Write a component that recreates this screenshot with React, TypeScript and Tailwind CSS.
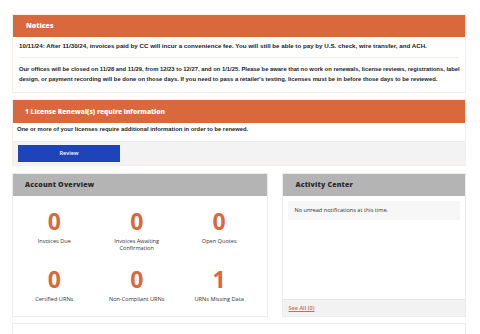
const orange = "bg-[#d9693c]";

const Stat = ({ value, label }: { value: string; label: React.ReactNode }) => (
  <div className="flex flex-col items-center">
    <div className="font-['Open_Sans',sans-serif] text-[23px] leading-[22px] font-bold text-[#d9693c]">
      {value}
    </div>
    <div className="mt-[6px] text-center font-['Open_Sans',sans-serif] text-[5.6px] leading-[7px] text-[#333] whitespace-nowrap">
      {label}
    </div>
  </div>
);

const App = () => {
  return (
    <div className="min-h-screen bg-white pl-[12px] pr-[14px] pt-[14px] font-['Liberation_Sans',Arial,sans-serif] text-[#222] overflow-hidden h-[334px]">
      {/* Notices */}
      <div className="border border-[#f6efe4]">
        <div className={`${orange} h-[22px] flex items-center px-[13px] font-['Open_Sans',sans-serif] text-[7px] font-extrabold text-white`}>
          Notices
        </div>
        <div className="px-[6px] pt-[4px] pb-[8px] font-bold leading-[10px] whitespace-nowrap">
          <p className="text-[6.2px]">
            10/11/24: After 11/30/24, invoices paid by CC will incur a convenience fee. You will still be able to pay by U.S. check, wire transfer, and ACH.
          </p>
          <div className="my-[6px] border-t border-[#f1ece4]" />
          <p className="text-[5.85px]">
            Our offices will be closed on 11/28 and 11/29, from 12/23 to 12/27, and on 1/1/25. Please be aware that no work on renewals, license reviews, registrations, label
            <br />
            design, or payment recording will be done on those days. If you need to pass a retailer's testing, licenses must be in before those days to be reviewed.
          </p>
        </div>
      </div>

      {/* License renewals */}
      <div className="mt-[6px] border border-[#f6efe4]">
        <div className={`${orange} h-[23px] flex items-center px-[12px] font-['Open_Sans',sans-serif] text-[6.6px] font-extrabold text-white`}>
          1 License Renewal(s) require information
        </div>
        <div className="h-[19px] px-[4px] pt-[1px] text-[5.85px] leading-[10px] font-bold border-b border-[#ececec]">
          One or more of your licenses require additional information in order to be renewed.
        </div>
        <div className="bg-[#f3f3f3] px-[5px] py-[3px] flex">
          <button className="w-[102px] h-[17px] bg-[#1f43b8] text-white text-[5.5px] font-['Open_Sans',sans-serif] font-semibold">
            Review
          </button>
        </div>
      </div>

      {/* Bottom panels */}
      <div className="mt-[7px] flex gap-[14px]">
        <div className="w-[257px] border border-[#ececec]">
          <div className="h-[22px] bg-[#b4b4b4] flex items-center px-[12px] font-['Open_Sans',sans-serif] text-[7px] tracking-[0.2px] font-extrabold text-[#2b2b2b]">
            Account Overview
          </div>
          <div className="grid grid-cols-3 pr-[7px] pt-[14px] pb-[13px]">
            <Stat value="0" label="Invoices Due" />
            <Stat
              value="0"
              label={
                <>
                  Invoices Awaiting
                  <br />
                  Confirmation
                </>
              }
            />
            <Stat value="0" label="Open Quotes" />
            <div className="col-span-3 h-[16px]" />
            <Stat value="0" label="Certified URNs" />
            <Stat value="0" label="Non-Compliant URNs" />
            <Stat value="1" label="URNs Missing Data" />
          </div>
        </div>

        <div className="w-[184px] border border-[#ececec] flex flex-col">
          <div className="h-[22px] bg-[#b4b4b4] flex items-center px-[12px] font-['Open_Sans',sans-serif] text-[7px] tracking-[0.2px] font-extrabold text-[#2b2b2b]">
            Activity Center
          </div>
          <div className="flex-1 px-[5px] pt-[5px]">
            <div className="h-[19px] bg-[#f7f7f7] flex items-center px-[6px] font-['Open_Sans',sans-serif] text-[5.6px] text-[#333]">
              No unread notifications at this time.
            </div>
          </div>
          <div className="h-[17px] bg-[#f2f2f2] border-t border-[#e6e6e6] flex items-center px-[5px]">
            <a href="#" className="font-['Open_Sans',sans-serif] text-[5.6px] font-semibold text-[#d9693c] underline">
              See All (0)
            </a>
          </div>
        </div>
      </div>

      <div className="mt-[6px] h-[20px] border-t border-l border-r border-[#ececec]" />
    </div>
  );
};

export default App;
